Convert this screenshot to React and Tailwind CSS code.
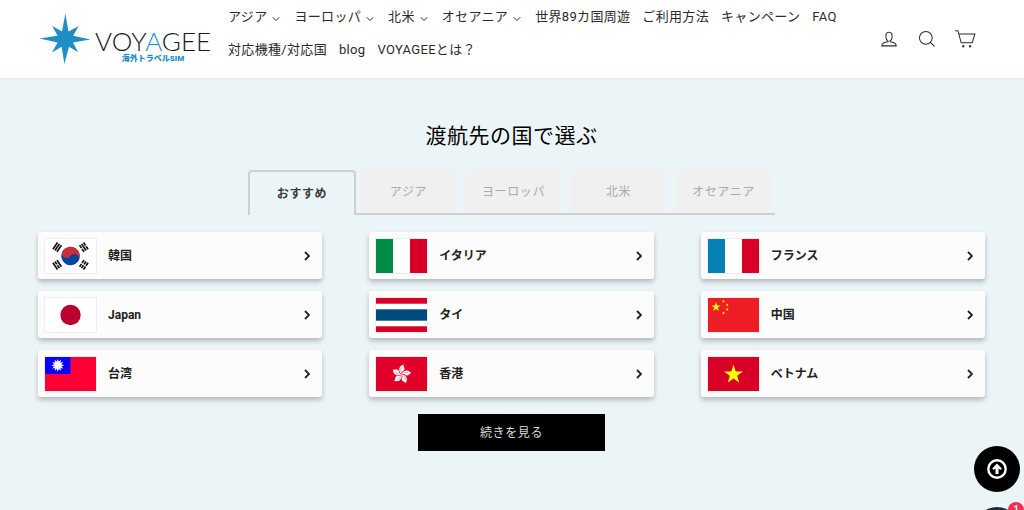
import { useState } from "react";
import { ChevronDown } from "lucide-react";

const NAV_ITEMS = [
  { label: "アジア", menu: true },
  { label: "ヨーロッパ", menu: true },
  { label: "北米", menu: true },
  { label: "オセアニア", menu: true },
  { label: "世界89カ国周遊" },
  { label: "ご利用方法" },
  { label: "キャンペーン" },
  { label: "FAQ" },
  { label: "対応機種/対応国" },
  { label: "blog" },
  { label: "VOYAGEEとは？" },
];

const TABS = ["おすすめ", "アジア", "ヨーロッパ", "北米", "オセアニア"];

const STAR = "0,-10 2.25,-3.09 9.51,-3.09 3.63,1.18 5.88,8.09 0,3.82 -5.88,8.09 -3.63,1.18 -9.51,-3.09 -2.25,-3.09";

// bars of one trigram, true = broken bar
function Trigram({ x, y, angle, bars }) {
  return (
    <g transform={`translate(${x} ${y}) rotate(${angle})`} stroke="#111" strokeWidth="1.7">
      {bars.map((broken, i) => (
        <path key={i} d={broken ? `M${(i - 1) * 2.4} -4V-0.5M${(i - 1) * 2.4} 0.5V4` : `M${(i - 1) * 2.4} -4V4`} />
      ))}
    </g>
  );
}

function Korea() {
  return (
    <>
      <rect width="51" height="34" fill="#fff" />
      <g transform="translate(25.5 17) rotate(33)">
        <circle r="9.2" fill="#0047a0" />
        <path d="M-9.2 0A9.2 9.2 0 0 1 9.2 0Z" fill="#cd2e3a" />
        <circle cx="-4.6" r="4.6" fill="#cd2e3a" />
        <circle cx="4.6" r="4.6" fill="#0047a0" />
      </g>
      <Trigram x={12.2} y={8.2} angle={34} bars={[false, false, false]} />
      <Trigram x={38.8} y={8.2} angle={-34} bars={[true, false, true]} />
      <Trigram x={12.2} y={25.8} angle={-34} bars={[false, true, false]} />
      <Trigram x={38.8} y={25.8} angle={34} bars={[true, true, true]} />
    </>
  );
}

function Tricolor({ left }) {
  return (
    <>
      <rect width="51" height="34" fill="#fff" />
      <rect width="17" height="34" fill={left} />
      <rect x="34" width="17" height="34" fill="#d80027" />
    </>
  );
}

function Japan() {
  return (
    <>
      <rect width="51" height="34" fill="#fff" />
      <circle cx="25.5" cy="17" r="10.2" fill="#bc002d" />
    </>
  );
}

function Thailand() {
  return (
    <>
      <rect width="51" height="34" fill="#d80027" />
      <rect y="5.7" width="51" height="22.6" fill="#fff" />
      <rect y="11.3" width="51" height="11.4" fill="#004b7d" />
    </>
  );
}

function China() {
  return (
    <>
      <rect width="51" height="34" fill="#ee1c25" />
      <g fill="#ff0">
        <polygon points={STAR} transform="translate(8 9) scale(.5)" />
        <polygon points={STAR} transform="translate(15.6 3.4) rotate(24) scale(.17)" />
        <polygon points={STAR} transform="translate(19.2 6.8) rotate(45) scale(.17)" />
        <polygon points={STAR} transform="translate(19.2 11.4) scale(.17)" />
        <polygon points={STAR} transform="translate(15.6 15) rotate(24) scale(.17)" />
      </g>
    </>
  );
}

function Taiwan() {
  return (
    <>
      <rect width="51" height="34" fill="#fe0034" />
      <rect width="25.5" height="17" fill="#0a00fe" />
      <g transform="translate(12.8 8.3)" fill="#fff">
        {[0, 30, 60, 90, 120, 150, 180, 210, 240, 270, 300, 330].map((angle) => (
          <polygon key={angle} points="0,-6.4 1.1,-3.4 -1.1,-3.4" transform={`rotate(${angle})`} />
        ))}
        <circle r="3.6" />
      </g>
    </>
  );
}

function HongKong() {
  return (
    <>
      <rect width="51" height="34" fill="#e0002a" />
      <g transform="translate(25.5 17.2)">
        {[8, 80, 152, 224, 296].map((angle) => (
          <g key={angle} transform={`rotate(${angle})`}>
            <path d="M0 0C-3.6 -2.2 -4.4 -7.6 0.8 -9.8C0.2 -8 2.6 -7.2 2.2 -5C1.8 -3 -0.8 -3 0 0Z" fill="#fff" />
            <path d="M-0.8 -2.4C-1.6 -4 -1.4 -5.4 -0.4 -6.8" fill="none" stroke="#e0002a" strokeWidth=".4" />
          </g>
        ))}
      </g>
    </>
  );
}

function Vietnam() {
  return (
    <>
      <rect width="51" height="34" fill="#d80027" />
      <polygon points={STAR} fill="#ff0" transform="translate(25.5 17.6)" />
    </>
  );
}

const COUNTRIES = [
  { name: "韓国", flag: <Korea /> },
  { name: "イタリア", flag: <Tricolor left="#008c45" /> },
  { name: "フランス", flag: <Tricolor left="#0680b5" /> },
  { name: "Japan", flag: <Japan /> },
  { name: "タイ", flag: <Thailand /> },
  { name: "中国", flag: <China /> },
  { name: "台湾", flag: <Taiwan /> },
  { name: "香港", flag: <HongKong /> },
  { name: "ベトナム", flag: <Vietnam /> },
];

function Logo() {
  return (
    <a href="#" className="flex w-[172px] shrink-0 items-center gap-1">
      <svg viewBox="0 0 52 52" className="size-[52px] shrink-0" fill="#1f8ec4">
        <path d="M26.4 0.5L29.4 18.4L39.5 13.2L34.2 22.8L51.5 26.6L34 29.6L39.2 39.3L30 33.8L25.4 51L22.6 33.8L13 39.6L18.6 29.4L0.5 25.6L18.6 22.8L13.2 13L23 18.6Z" />
      </svg>
      <span className="flex flex-col items-center pt-4">
        <span className="font-[Lato] text-[26px] leading-6 font-light text-[#1a1a1a]">
          VOY<span className="text-[#1f8ec4]">A</span>GEE
        </span>
        <span className="text-[8px] leading-3 font-black whitespace-nowrap text-[#1f8ec4]">海外トラベルSIM</span>
      </span>
    </a>
  );
}

function HeaderIcon({ label, children }) {
  return (
    <button type="button" aria-label={label} className="cursor-pointer">
      <svg viewBox="0 0 64 64" className="size-[22px]" fill="none" stroke="#2b2b2b" strokeWidth="3">
        {children}
      </svg>
    </button>
  );
}

function Header() {
  return (
    <header className="flex items-center border-b border-[#e4ecec] bg-white pr-12 pl-[39px]">
      <Logo />
      <nav className="ml-[17px] flex min-h-[78px] flex-1 flex-wrap content-start gap-x-3">
        {NAV_ITEMS.map((item) => (
          <a
            key={item.label}
            href="#"
            className="flex h-[33px] items-center text-[13px] tracking-wide whitespace-nowrap text-[#2b2b2b]"
          >
            {item.label}
            {item.menu && <ChevronDown size={12} strokeWidth={2} className="mt-1 ml-[3px]" />}
          </a>
        ))}
      </nav>
      <div className="flex items-center gap-4">
        <HeaderIcon label="ログイン">
          <path d="M35 39.84v-2.53c3.3-1.91 6-6.66 6-11.41 0-7.63 0-13.82-9-13.82s-9 6.19-9 13.82c0 4.75 2.7 9.51 6 11.41v2.53c-10.18.85-18 6-18 12.16h42c0-6.19-7.82-11.31-18-12.16z" />
        </HeaderIcon>
        <HeaderIcon label="検索">
          <path d="M47.16 28.58A18.58 18.58 0 1 1 28.58 10a18.58 18.58 0 0 1 18.58 18.58zM54 54L41.94 42" />
        </HeaderIcon>
        <HeaderIcon label="カート">
          <path d="M14 17.44h46.79l-7.94 25.61H20.96l-9.65-35.1H3" />
          <circle cx="27" cy="53" r="2" />
          <circle cx="47" cy="53" r="2" />
        </HeaderIcon>
      </div>
    </header>
  );
}

function RegionTabs({ active, onChange }) {
  return (
    <div role="tablist" className="flex justify-center">
      {TABS.map((tab, i) =>
        i === active ? (
          <button
            key={tab}
            role="tab"
            aria-selected="true"
            className="h-[45px] w-[108px] rounded-t border-2 border-b-0 border-[#cfcfcf] text-[12px] font-bold tracking-wider text-[#3a3a3a]"
          >
            {tab}
          </button>
        ) : (
          <div key={tab} className="border-b-2 border-[#cfcfcf] px-[5px] last:pr-1">
            <button
              role="tab"
              aria-selected="false"
              onClick={() => onChange(i)}
              className="h-[43px] w-[95px] cursor-pointer rounded-t bg-[#f0f0f0] text-[12px] tracking-wider text-[#aaa]"
            >
              {tab}
            </button>
          </div>
        )
      )}
    </div>
  );
}

function CountryCard({ name, flag }) {
  return (
    <a href="#" className="flex h-[47px] items-center rounded-[3px] bg-[#fcfcfc] pr-3 pl-[7px] shadow-[0_3px_5px_rgba(0,0,0,0.24)]">
      <svg viewBox="0 0 51 34" className="h-[34px] w-[51px] outline outline-[#eee]">
        {flag}
      </svg>
      <span className="ml-3 flex-1 text-[12px] font-bold text-[#222]">{name}</span>
      <svg viewBox="0 0 6 10" className="h-[10px] w-[6px]" fill="none" stroke="#222" strokeWidth="1.8">
        <path d="M1 1L5 5L1 9" />
      </svg>
    </a>
  );
}

function FloatingButtons() {
  return (
    <>
      <button
        type="button"
        aria-label="トップへ戻る"
        onClick={() => window.scrollTo(0, 0)}
        className="fixed right-1 bottom-[18px] flex size-[46px] cursor-pointer items-center justify-center rounded-full bg-black"
      >
        <svg viewBox="0 0 20 20" className="size-5">
          <circle cx="10" cy="10" r="8.7" fill="none" stroke="#fff" strokeWidth="2.4" />
          <path d="M10 4.6L14.8 9.6L13.4 11L11.5 9.6V15H8.5V9.6L6.6 11L5.2 9.6Z" fill="#fff" />
        </svg>
      </button>
      <button
        type="button"
        aria-label="チャット"
        className="fixed right-1 -bottom-[43px] size-[46px] cursor-pointer rounded-full bg-[#1f2d38]"
      >
        <span className="absolute -top-[5px] -right-1 flex size-4 items-center justify-center rounded-full bg-[#f5304f] text-[10px] leading-4 font-bold text-white">
          1
        </span>
      </button>
    </>
  );
}

export default function App() {
  const [active, setActive] = useState(0);

  return (
    <div className="flex min-h-screen flex-col bg-[#ebf4f7] font-[Roboto,'Noto_Sans_CJK_JP',sans-serif]">
      <Header />
      <main className="flex-1 pt-[41px] pr-[39px] pb-10 pl-[38px]">
        <h1 className="text-center text-[21px] leading-8 tracking-wide text-black">渡航先の国で選ぶ</h1>
        <div className="mt-[18px]">
          <RegionTabs active={active} onChange={setActive} />
        </div>
        <div className="mt-[17px] grid grid-cols-3 gap-x-[47px] gap-y-3">
          {COUNTRIES.map((country) => (
            <CountryCard key={country.name} name={country.name} flag={country.flag} />
          ))}
        </div>
        <button
          type="button"
          className="mx-auto mt-[17px] block h-[37px] w-[187px] cursor-pointer bg-black text-[12px] tracking-wider text-[#ddd]"
        >
          続きを見る
        </button>
      </main>
      <FloatingButtons />
    </div>
  );
}
